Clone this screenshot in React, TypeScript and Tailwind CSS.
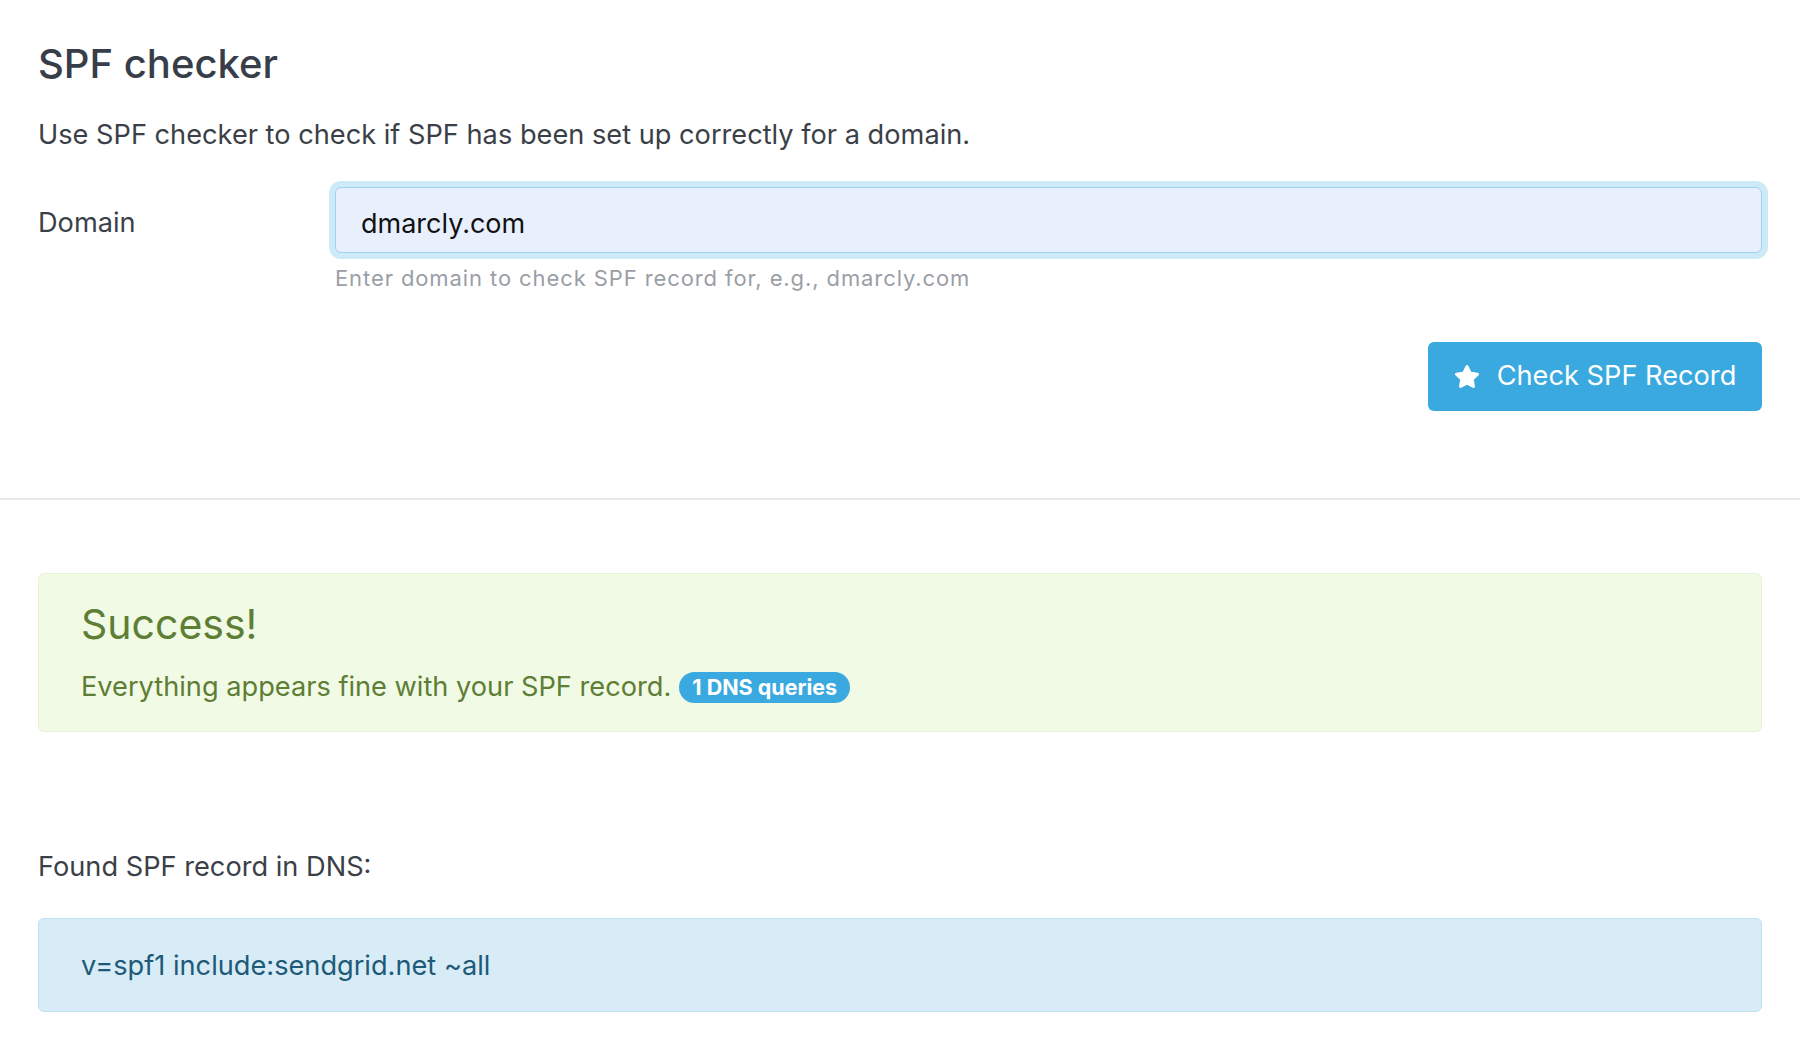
import { FaStar } from "react-icons/fa";

export default function App() {
  return (
    <div className="min-h-screen bg-white font-['Inter','Noto_Sans',sans-serif] text-[#3b3f47]">
      <section className="px-[38px] pt-[42px]">
        <h1 className="text-[40px] font-medium leading-[43px] text-[#373d49]">SPF checker</h1>
        <p className="mt-[31px] text-[27.2px] leading-[38.4px]">
          Use SPF checker to check if SPF has been set up correctly for a domain.
        </p>

        <div className="mt-[33px] flex">
          <label className="flex h-[66px] w-[297px] shrink-0 items-center pt-[6px] text-[27.2px]">
            Domain
          </label>
          <div className="flex-1">
            <input
              defaultValue="dmarcly.com"
              className="h-[66px] w-full rounded-[6px] border-[1.5px] border-[#9fd3ef] bg-[#e8f0fe] pl-[25px] pt-[6px] text-[27px] text-[#111] shadow-[0_0_0_6px_#cdeaf8] outline-none"
            />
            <p className="mt-[11px] text-[22px] leading-[28.8px] tracking-[0.9px] text-[#9a9ea6]">
              Enter domain to check SPF record for, e.g., dmarcly.com
            </p>
          </div>
        </div>

        <div className="mt-[49px] flex justify-end pb-[87px]">
          <button
            type="button"
            className="flex h-[69px] w-[334px] items-center justify-center gap-[17px] rounded-[6px] bg-[#3aa9e0] text-[27.2px] text-white"
          >
            <FaStar className="h-[23px] w-[26px]" />
            <span>Check SPF Record</span>
          </button>
        </div>
      </section>

      <div className="h-[2px] bg-[#e8e8e8]" />

      <section className="px-[38px] pt-[73px]">
        <div className="rounded-[6px] border border-[#e6f3d6] bg-[#f0fae4] px-[42px] pb-[24px] pt-[29px] text-[#5e7d35]">
          <h2 className="text-[41px] leading-[43px]">Success!</h2>
          <div className="mt-[22px] flex items-center gap-[8px] text-[27.2px] leading-[38.4px]">
            <span>Everything appears fine with your SPF record.</span>
            <span className="flex h-[31px] items-center rounded-full bg-[#3aa9e0] px-[13px] text-[21.5px] font-bold text-white">
              1 DNS queries
            </span>
          </div>
        </div>

        <p className="mt-[116px] text-[27.2px] leading-[38.4px]">Found SPF record in DNS:</p>

        <div className="mt-[32px] rounded-[6px] border border-[#bde0f2] bg-[#d7ecf7] px-[42px] pb-[26px] pt-[28px] text-[27.2px] leading-[38.4px] text-[#1e5a78]">
          v=spf1 include:sendgrid.net ~all
        </div>
      </section>
    </div>
  );
}
